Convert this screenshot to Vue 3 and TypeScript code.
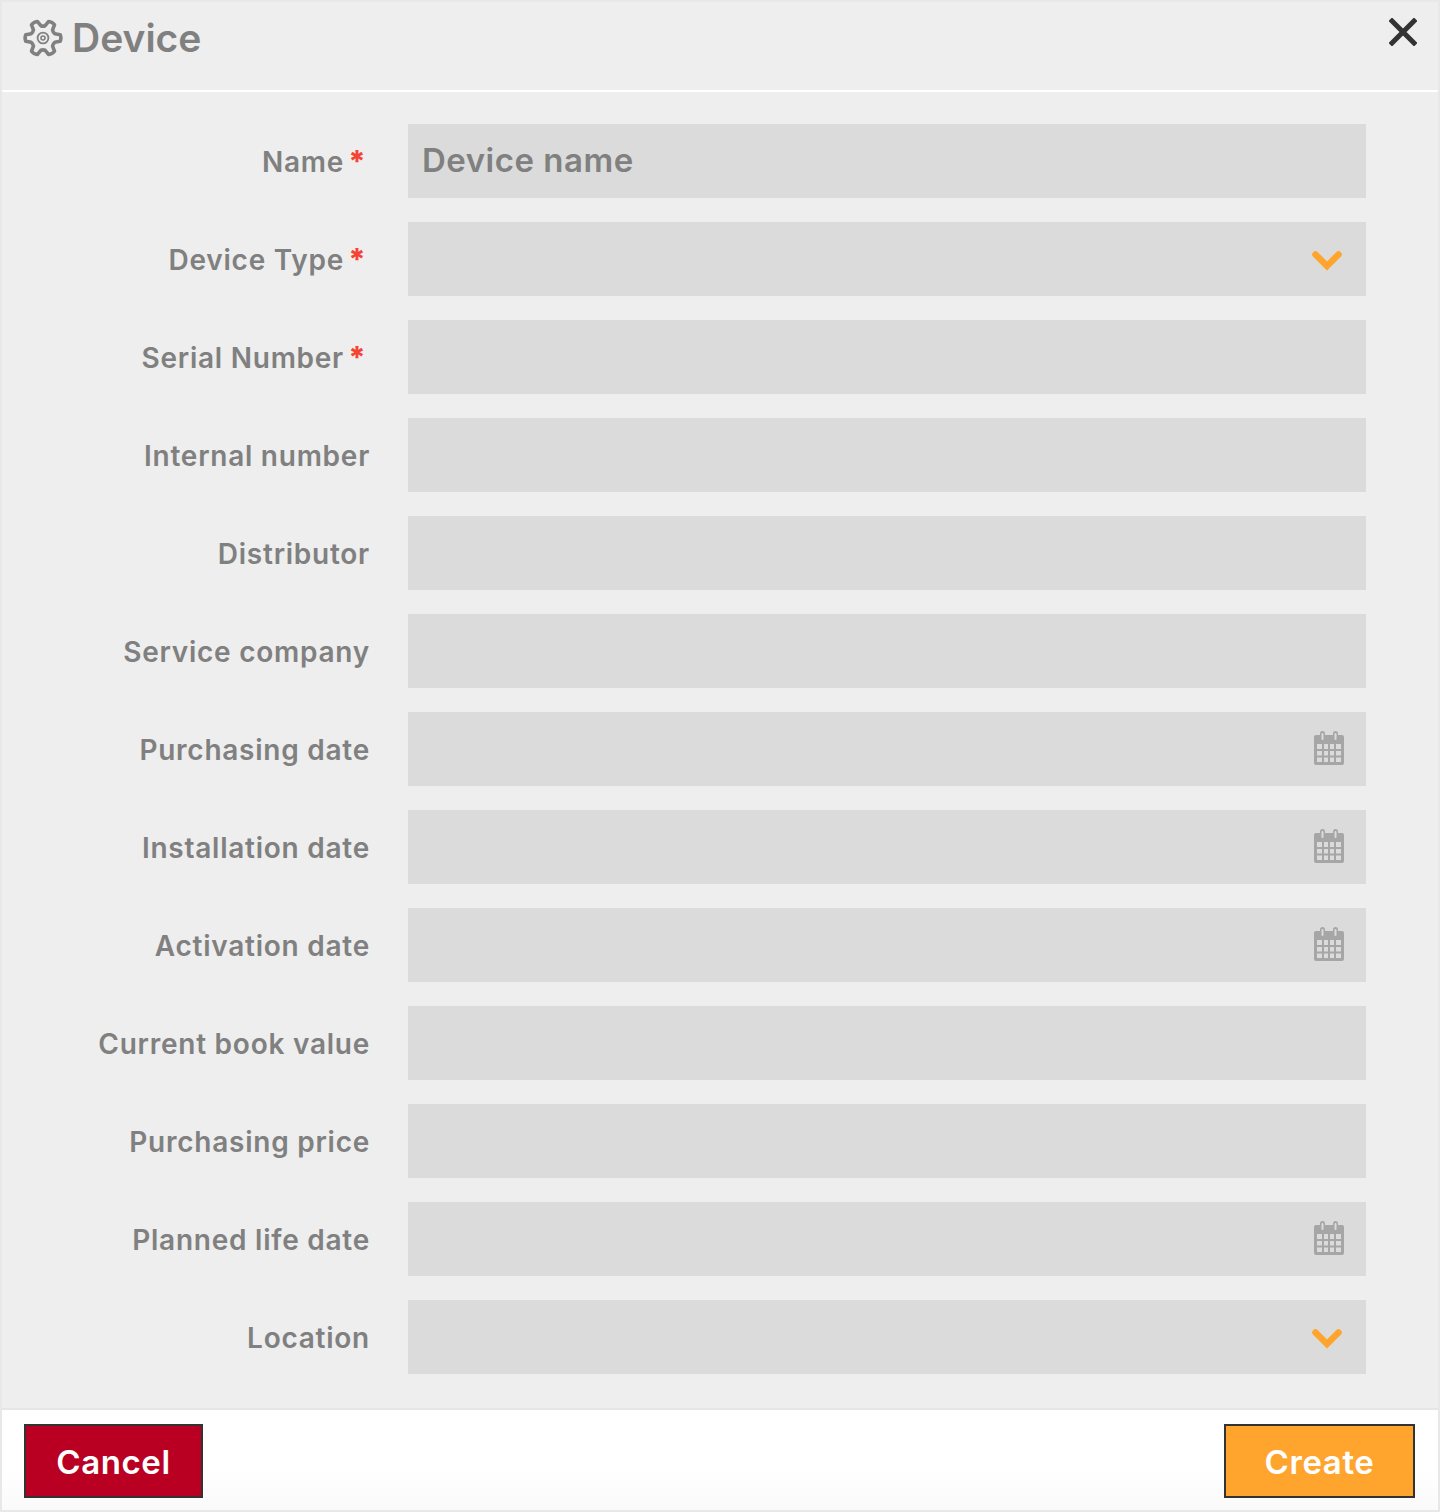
<script setup lang="ts">
type Field = { label: string; required?: boolean; kind?: 'select' | 'date'; placeholder?: string }

const fields: Field[] = [
  { label: 'Name', required: true, placeholder: 'Device name' },
  { label: 'Device Type', required: true, kind: 'select' },
  { label: 'Serial Number', required: true },
  { label: 'Internal number' },
  { label: 'Distributor' },
  { label: 'Service company' },
  { label: 'Purchasing date', kind: 'date' },
  { label: 'Installation date', kind: 'date' },
  { label: 'Activation date', kind: 'date' },
  { label: 'Current book value' },
  { label: 'Purchasing price' },
  { label: 'Planned life date', kind: 'date' },
  { label: 'Location', kind: 'select' },
]

// six lobed gear outline, teeth at 0, 60, 120 ... degrees
function gearPath(): string {
  const pt = (deg: number, r: number) => {
    const a = (deg * Math.PI) / 180
    return `${(20 + r * Math.cos(a)).toFixed(2)} ${(20 + r * Math.sin(a)).toFixed(2)}`
  }
  let d = ''
  for (let i = 0; i < 6; i++) {
    const c = i * 60
    d += `${i === 0 ? 'M' : 'L'}${pt(c - 20, 12.5)}L${pt(c - 11, 17.5)}Q${pt(c, 18.6)} ${pt(c + 11, 17.5)}L${pt(c + 20, 12.5)}Q${pt(c + 30, 11.5)} `
    d += pt(c + 40, 12.5)
  }
  return d + 'Z'
}
const gear = gearPath()
</script>

<template>
  <div class="dialog">
    <header class="head">
      <div class="title">
        <svg class="gear" viewBox="0 0 40 40" width="40" height="40" fill="none" stroke="#808080">
          <path stroke-width="3.6" stroke-linejoin="round" :d="gear" />
          <circle cx="20" cy="20" r="5.4" stroke-width="1.8" />
          <circle cx="20" cy="20" r="2" stroke-width="1.6" />
        </svg>
        <span>Device</span>
      </div>
      <svg class="close" viewBox="0 0 28 28" width="28" height="28" stroke="#333" stroke-width="5" stroke-linecap="square">
        <path d="M3 3l22 22M25 3L3 25" />
      </svg>
    </header>

    <form class="body" @submit.prevent>
      <div v-for="field in fields" :key="field.label" class="row">
        <label class="label">
          {{ field.label }}<span v-if="field.required" class="req">*</span>
        </label>
        <div class="input">
          <span v-if="field.placeholder" class="placeholder">{{ field.placeholder }}</span>
          <svg v-if="field.kind === 'select'" class="chevron" viewBox="0 0 30 20" width="30" height="20" fill="none" stroke="#ffa42c" stroke-width="6.500" stroke-linecap="round" stroke-linejoin="miter">
            <path d="M3.500 3.500L15 15 26.500 3.500" />
          </svg>
          <svg v-if="field.kind === 'date'" class="calendar" viewBox="0 0 30 34" width="30" height="34" fill="#a6a6a6">
            <path fill-rule="evenodd" d="M2 4h4V2.500a2.500 2.500 0 0 1 5 0V4h8V2.500a2.500 2.500 0 0 1 5 0V4h4a2 2 0 0 1 2 2v26a2 2 0 0 1-2 2H2a2 2 0 0 1-2-2V6a2 2 0 0 1 2-2zM7.500 3v5a1 1 0 0 0 2 0V3a1 1 0 0 0-2 0zm13 0v5a1 1 0 0 0 2 0V3a1 1 0 0 0-2 0zM3 13v5h5v-5zm7 0v5h4v-5zm6 0v5h4v-5zm6 0v5h5v-5zM3 20v4.500h5V20zm7 0v4.500h4V20zm6 0v4.500h4V20zm6 0v4.500h5V20zM3 26.500V31h5v-4.500zm7 0V31h4v-4.500zm6 0V31h4v-4.500zm6 0V31h5v-4.500z" />
          </svg>
        </div>
      </div>
    </form>

    <footer class="foot">
      <button type="button" class="btn cancel">Cancel</button>
      <button type="button" class="btn create">Create</button>
    </footer>
  </div>
</template>

<style scoped>
  .dialog {
    width: 1440px;
    height: 1512px;
    box-sizing: border-box;
    border: 2px solid #e8e8e8;
    background: #eeeeee;
    display: flex;
    flex-direction: column;
    font-family: Inter, 'Noto Sans', sans-serif;
  }

  .head {
    flex: none;
    box-sizing: border-box;
    border-bottom: 2px solid #ffffff;
    display: flex;
    justify-content: space-between;
    align-items: flex-start;
    padding: 14px 21px 0 21px;
    margin-top: -2px;
    height: 92px;
  }

  .title {
    display: flex;
    align-items: center;
    gap: 9px;
    color: #808080;
    font-size: 39px;
    font-weight: 600;
    line-height: 48px;
  }

  .close {
    margin-top: 4px;
  }

  .body {
    flex: 1;
    padding-top: 32px;
    display: flex;
    flex-direction: column;
    gap: 24px;
  }

  .row {
    display: flex;
    align-items: center;
    height: 74px;
  }

  .label {
    width: 368px;
    flex: none;
    box-sizing: border-box;
    text-align: right;
    color: #808080;
    font-size: 28px;
    font-weight: 600;
    letter-spacing: 0.75px;
    line-height: 36px;
    margin-top: 2px;
  }

  .req {
    color: #f44336;
    display: inline-block;
    width: 26px;
    text-align: center;
    font-size: 30px;
    font-weight: 800;
    letter-spacing: 0;
    line-height: 20px;
  }

  .input {
    margin-left: 38px;
    width: 958px;
    height: 74px;
    background: #dbdbdb;
    display: flex;
    align-items: center;
    box-sizing: border-box;
    padding: 0 22px 0 14px;
  }

  .placeholder {
    color: #808080;
    font-size: 33px;
    font-weight: 600;
    letter-spacing: 0.5px;
    margin-top: -2px;
  }

  .chevron {
    margin-left: auto;
    margin-right: 2px;
    margin-top: 4px;
  }

  .calendar {
    margin-left: auto;
    margin-top: -3px;
  }

  .foot {
    height: 102px;
    flex: none;
    box-sizing: border-box;
    border-top: 2px solid #e6e6e6;
    background: linear-gradient(#ffffff 60%, #fafafa);
    display: flex;
    justify-content: space-between;
    padding: 14px 23px 0 22px;
  }

  .btn {
    height: 74px;
    box-sizing: border-box;
    border: 2px solid #333333;
    color: #ffffff;
    font-family: Inter, 'Noto Sans', sans-serif;
    font-size: 33px;
    font-weight: 600;
    letter-spacing: 0.6px;
    padding: 2px 0 0;
  }

  .cancel {
    width: 179px;
    background: #b90022;
  }

  .create {
    width: 191px;
    background: #ffa42c;
  }
</style>

<style>
  body {
    background: #ffffff;
  }
</style>
